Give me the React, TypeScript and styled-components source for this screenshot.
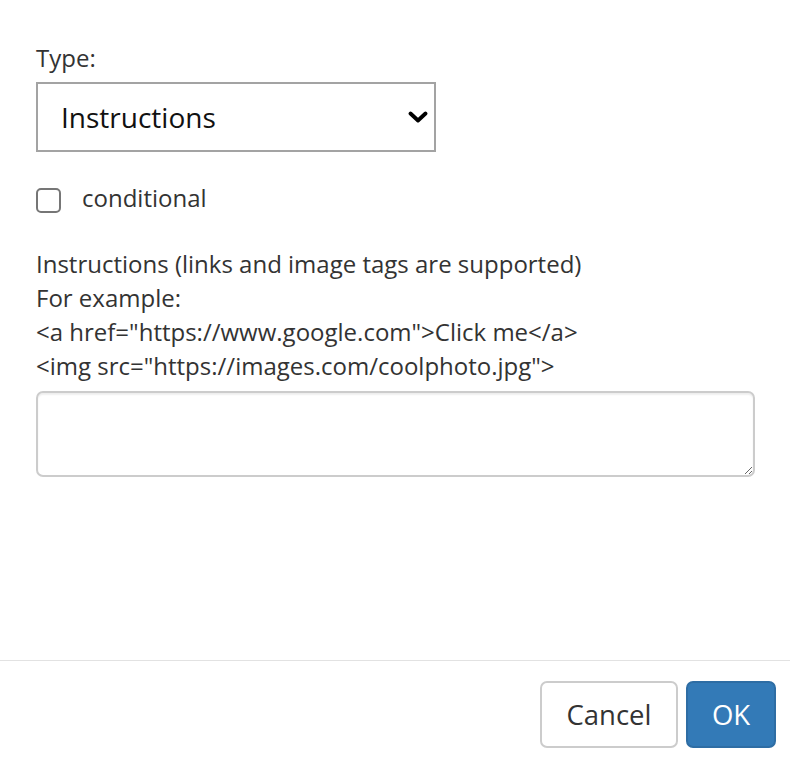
import React from "react";
import styled, { createGlobalStyle } from "styled-components";

const Global = createGlobalStyle`
  html, body { margin: 0; padding: 0; background: #fff; }
  body { font-family: "Open Sans", "Noto Sans", sans-serif; color: #333; }
  * { box-sizing: border-box; }
`;

const Modal = styled.div`
  width: 790px;
  height: 770px;
  display: flex;
  flex-direction: column;
  background: #fff;
`;

const Body = styled.div`
  height: 660px;
  padding: 40.5px 35px 0 36px;
  display: flex;
  flex-direction: column;
`;

const Label = styled.label`
  display: block;
  font-size: 24px;
  line-height: 34px;
  color: #333;
  margin-bottom: 7.5px;
`;

const SelectWrap = styled.div`
  position: relative;
  width: 400px;
`;

const Select = styled.select`
  appearance: none;
  -webkit-appearance: none;
  width: 400px;
  height: 70px;
  border: 2px solid #a3a3a3;
  border-radius: 0;
  background: #fff;
  padding: 0 40px 0 23px;
  font-family: "Open Sans", "Noto Sans", sans-serif;
  font-size: 28px;
  color: #111;
  outline: none;
`;

const Chevron = styled.svg`
  position: absolute;
  right: 8px;
  top: 29px;
  pointer-events: none;
`;

const CheckRow = styled.label`
  display: flex;
  align-items: flex-start;
  margin-top: 28.5px;
  font-size: 24px;
  line-height: 34px;
  color: #333;
`;

const Check = styled.input`
  appearance: none;
  -webkit-appearance: none;
  width: 25px;
  height: 25px;
  margin: 7.5px 21px 0 0;
  border: 2px solid #767676;
  border-radius: 5px;
  background: #fff;
  flex: none;
`;

const Help = styled.p`
  margin: 32px 0 0;
  font-size: 24px;
  line-height: 34px;
  color: #333;
`;

const TextArea = styled.textarea`
  display: block;
  margin-top: 8.5px;
  width: 719px;
  height: 86px;
  border: 2px solid #ccc;
  border-radius: 7px;
  box-shadow: inset 0 1.7px 1.7px rgba(0, 0, 0, 0.075);
  font-family: "Open Sans", "Noto Sans", sans-serif;
  font-size: 24px;
  padding: 10px 20px;
  outline: none;
`;

const Footer = styled.div`
  border-top: 1.7px solid #e2e2e2;
  padding: 20.3px 14px 0 0;
  display: flex;
  justify-content: flex-end;
  gap: 8px;
`;

const Button = styled.button<{ $primary?: boolean }>`
  height: 67px;
  width: ${(p) => (p.$primary ? "90px" : "138px")};
  border-radius: 7px;
  border: 2px solid ${(p) => (p.$primary ? "#2e6da4" : "#ccc")};
  background: ${(p) => (p.$primary ? "#337ab7" : "#fff")};
  color: ${(p) => (p.$primary ? "#fff" : "#333")};
  font-family: "Open Sans", "Noto Sans", sans-serif;
  font-size: 27.5px;
  padding: 0;
  display: flex;
  align-items: center;
  justify-content: center;
`;

export default function App() {
  return (
    <>
      <Global />
      <Modal>
        <Body>
          <Label htmlFor="type">Type:</Label>
          <SelectWrap>
            <Select id="type" defaultValue="instructions">
              <option value="instructions">Instructions</option>
            </Select>
            <Chevron width="20" height="12" viewBox="0 0 20 12">
              <path d="M2.5 2.5 L10 9.5 L17.5 2.5" fill="none" stroke="#000" strokeWidth="3.8" strokeLinecap="round" strokeLinejoin="round" />
            </Chevron>
          </SelectWrap>
          <CheckRow>
            <Check type="checkbox" />
            conditional
          </CheckRow>
          <Help>
            Instructions (links and image tags are supported)
            <br />
            For example:
            <br />
            {'<a href="https://www.google.com">Click me</a>'}
            <br />
            {'<img src="https://images.com/coolphoto.jpg">'}
          </Help>
          <TextArea />
        </Body>
        <Footer>
          <Button>Cancel</Button>
          <Button $primary>OK</Button>
        </Footer>
      </Modal>
    </>
  );
}
